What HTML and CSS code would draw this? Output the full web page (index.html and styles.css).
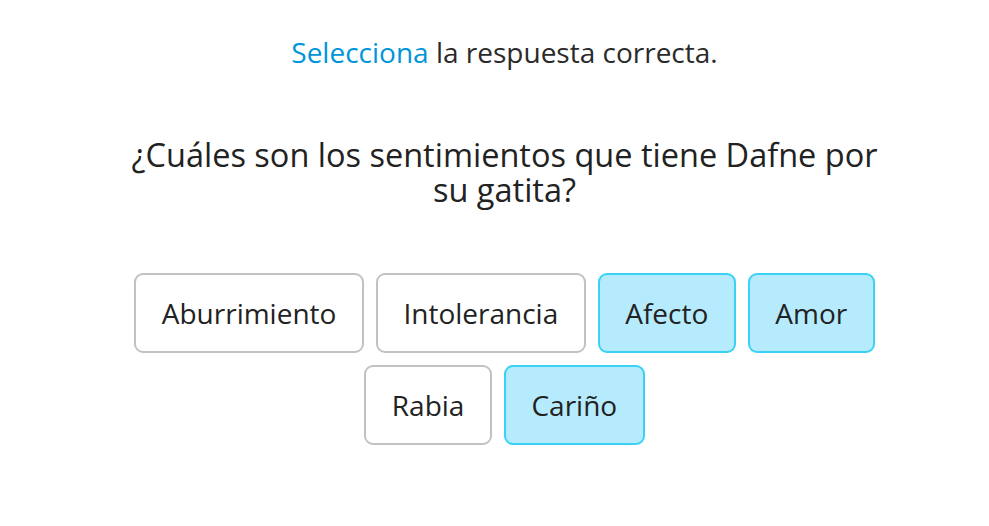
FILE: index.html
```html
<!DOCTYPE html>
<html lang="es">
<head>
<meta charset="utf-8">
<link rel="stylesheet" href="styles.css">
</head>
<body>
<main class="quiz">
  <p class="instruction"><span class="accent">Selecciona</span> la respuesta correcta.</p>
  <h1 class="question">¿Cuáles son los sentimientos que tiene Dafne por su gatita?</h1>
  <div class="options">
    <button class="option">Aburrimiento</button>
    <button class="option">Intolerancia</button>
    <button class="option selected">Afecto</button>
    <button class="option selected">Amor</button>
    <button class="option">Rabia</button>
    <button class="option selected">Cariño</button>
  </div>
</main>
</body>
</html>
```

FILE: styles.css
```css
html, body {
  margin: 0;
  padding: 0;
  background: #ffffff;
}
body {
  font-family: "Open Sans", "Noto Sans", sans-serif;
  color: #222222;
  padding-left: 20px;
}
.quiz {
  width: 760px;
  margin: 0 auto;
  padding-top: 34px;
  display: flex;
  flex-direction: column;
  align-items: center;
}
.instruction {
  margin: 0;
  font-size: 28px;
  line-height: 36px;
  color: #2a2a2a;
}
.accent {
  color: #0095d9;
}
.question {
  margin: 67px 0 0;
  font-size: 32.5px;
  font-weight: 400;
  line-height: 35px;
  text-align: center;
  color: #222222;
}
.options {
  margin-top: 66px;
  display: flex;
  flex-wrap: wrap;
  justify-content: center;
  gap: 12px 12px;
}
.option {
  font-family: inherit;
  font-size: 28px;
  color: #222222;
  background: #ffffff;
  border: 2.5px solid #c2c2c2;
  border-radius: 9px;
  height: 80px;
  padding: 0 25.5px;
  cursor: pointer;
}
.option.selected {
  background: #b5ebfd;
  border-color: #3ad2f4;
}
```
